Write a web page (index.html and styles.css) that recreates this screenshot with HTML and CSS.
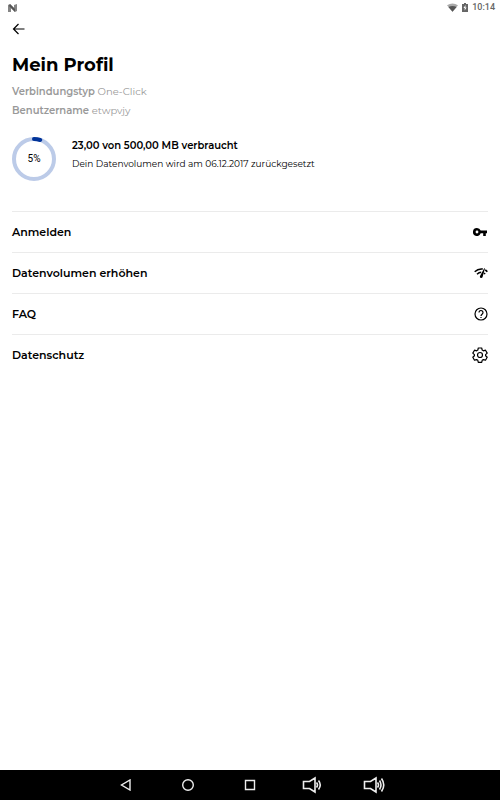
FILE: index.html
```html
<!DOCTYPE html>
<html lang="de">
<head>
  <meta charset="UTF-8">
  <meta name="viewport" content="width=device-width, initial-scale=1">
  <title>Mein Profil</title>
  <link rel="stylesheet" href="styles.css">
</head>
<body>
  <div class="status-bar">
    <svg width="9" height="8" viewBox="0 0 9 8" aria-hidden="true">
      <path d="M0 1l2-1 4 4V1l3-1v7L7 8 3 4v4H0z" fill="#858585"/>
      <path d="M2 0l5 5v3L1 2z" fill="#555"/>
    </svg>
    <div class="status-right">
      <svg width="11" height="9" viewBox="0 0 12 9" aria-hidden="true">
        <path d="M0 2Q6-2 12 2L6 9z" fill="#aaa"/>
        <path d="M1.500 4Q6 1.500 10.500 4L6 9z" fill="#555"/>
      </svg>
      <svg width="6" height="9" viewBox="0 0 6 9" aria-hidden="true">
        <path d="M0 1h2V0h2v1h2v8H0z" fill="#666"/>
        <path d="M3.600 2L1.500 5h1.200v2.500L4.600 4.400H3.400z" fill="#fff"/>
      </svg>
      <span>10:14</span>
    </div>
  </div>

  <main class="content">
    <button class="back" type="button" aria-label="Zurück">
      <svg width="13" height="12" viewBox="0 0 13 12">
        <path d="M12.500 6H1.500M6.500 1L1.500 6l5 5" fill="none" stroke="#000" stroke-width="1.200"/>
      </svg>
    </button>

    <h1>Mein Profil</h1>
    <p class="info"><b>Verbindungstyp</b> One-Click</p>
    <p class="info"><b>Benutzername</b> etwpvjy</p>

    <section class="usage">
      <div class="ring">
        <svg width="44" height="44" viewBox="0 0 44 44" aria-hidden="true">
          <circle cx="22" cy="22" r="20" fill="none" stroke="#bccbe8" stroke-width="4"/>
          <path d="M22 2a20 20 0 0 1 6.200 1" fill="none" stroke="#003399" stroke-width="4" stroke-linecap="round"/>
        </svg>
        <span class="percent">5%</span>
      </div>
      <div>
        <p class="used">23,00 von 500,00 MB verbraucht</p>
        <p class="reset">Dein Datenvolumen wird am 06.12.2017 zurückgesetzt</p>
      </div>
    </section>

    <nav class="menu">
      <a href="#anmelden">Anmelden
        <svg width="15" height="8" viewBox="0 0 15 8">
          <path fill-rule="evenodd" d="M4 0a4 4 0 0 1 3.700 2.600H14v2.700h-1.200V8h-2.600V5.300H7.700A4 4 0 1 1 4 0zM4 2.600a1.400 1.400 0 1 0 0 2.800 1.400 1.400 0 0 0 0-2.800z"/>
        </svg>
      </a>
      <a href="#datenvolumen">Datenvolumen erhöhen
        <svg width="14" height="12" viewBox="0 0 14 12">
          <path d="M.7 4.700Q4.200 1.300 8.800 2M11.200 3q1.300.700 2.100 1.700M3 7.200Q5 5.200 7.200 5.200M10 6q.700.500 1.100 1.200" fill="none" stroke="#000" stroke-width="1.500"/>
          <path d="M10.200 1.200l.8.300-2.500 8.800a1.400 1.400 0 0 1-2.600-1z"/>
        </svg>
      </a>
      <a href="#faq">FAQ
        <svg width="14" height="14" viewBox="0 0 14 14">
          <circle cx="7" cy="7" r="6" fill="none" stroke="#000" stroke-width="1.200"/>
          <path d="M5 5.500a2 2 0 1 1 3.200 1.600C7.300 7.800 7 8 7 9M7 9.900v1.200" fill="none" stroke="#000" stroke-width="1.200"/>
        </svg>
      </a>
      <a href="#datenschutz">Datenschutz
        <svg width="16" height="16" viewBox="0 0 16 16">
          <path d="M6.300 1h3.400l.5 2.100 1.200.7 2.100-.6 1.700 2.900-1.600 1.500v1.200l1.600 1.500-1.700 2.900-2.100-.6-1.200.7-.5 2.100H6.300l-.5-2.100-1.200-.7-2.100.6L.8 10.300l1.600-1.500V7.600L.8 6.100l1.700-2.900 2.100.6 1.200-.7z" fill="none" stroke="#000" stroke-width="1.200" stroke-linejoin="round"/>
          <circle cx="8" cy="8" r="2.500" fill="none" stroke="#000" stroke-width="1.200"/>
        </svg>
      </a>
    </nav>
  </main>

  <footer class="nav-bar">
    <button type="button" aria-label="Zurück">
      <svg width="12" height="12" viewBox="0 0 12 12"><path d="M10 1v10L1.500 6z"/></svg>
    </button>
    <button type="button" aria-label="Startseite">
      <svg width="12" height="12" viewBox="0 0 12 12"><circle cx="6" cy="6" r="5.300"/></svg>
    </button>
    <button type="button" aria-label="Übersicht">
      <svg width="12" height="12" viewBox="0 0 12 12"><path d="M1.500 1.500h9v9h-9z"/></svg>
    </button>
    <button type="button" aria-label="Leiser">
      <svg class="volume" width="22" height="18" viewBox="0 0 22 18"><path d="M2.500 5.500h6L14 2v14l-5.500-3.500h-6zM15.500 6.500q2 2.500 0 5M17.500 4.500q3.500 4.500 0 9"/></svg>
    </button>
    <button type="button" aria-label="Lauter">
      <svg class="volume" width="22" height="18" viewBox="0 0 22 18"><path d="M1.500 5.500h6L13 2v14l-5.500-3.500h-6zM14.500 6.500q2 2.500 0 5M16.500 4.500q3 4.500 0 9M18.500 2.500q4.500 6.500 0 13"/></svg>
    </button>
  </footer>
</body>
</html>
```
FILE: styles.css
```css
* {
  box-sizing: border-box;
}
body {
  margin: 0;
  min-height: 100vh;
  display: flex;
  flex-direction: column;
  background: #fff;
  color: #000;
  font-family: Montserrat, Inter, sans-serif;
}
svg {
  display: block;
  flex-shrink: 0;
}
h1, p {
  margin: 0;
}
button {
  padding: 0;
  border: 0;
  background: none;
}

.status-bar {
  display: flex;
  align-items: center;
  justify-content: space-between;
  height: 15px;
  padding: 0 5px 0 8px;
  color: #666;
  font: 500 9px/15px Roboto, sans-serif;
}
.status-right {
  display: flex;
  align-items: center;
  gap: 4px;
}

.content {
  flex: 1;
  padding: 8px 12px;
}
.back {
  display: block;
}
h1 {
  margin: 18px 0 4px;
  font-size: 18px;
  line-height: 25px;
  font-weight: 700;
}
.info {
  color: #999;
  font-size: 10px;
  line-height: 19px;
}
.info b {
  font-weight: 600;
}

.usage {
  display: flex;
  gap: 16px;
  margin: 17px 0 30px;
}
.ring {
  position: relative;
}
.percent {
  position: absolute;
  inset: 0;
  font: 10px/44px Roboto, sans-serif;
  text-align: center;
}
.used {
  font-size: 10px;
  line-height: 18px;
  font-weight: 600;
}
.reset {
  font-size: 9px;
  line-height: 18px;
}

.menu a {
  display: flex;
  align-items: center;
  justify-content: space-between;
  height: 41px;
  border-top: 1px solid #ebebeb;
  color: #000;
  font-size: 11px;
  font-weight: 600;
  text-decoration: none;
}

.nav-bar {
  display: flex;
  justify-content: center;
  height: 30px;
  background: #000;
}
.nav-bar button {
  display: flex;
  align-items: center;
  justify-content: center;
  width: 62px;
}
.nav-bar svg {
  fill: none;
  stroke: #eee;
  stroke-width: 1.4;
}
.nav-bar .volume {
  stroke-width: 1.6;
}
```
